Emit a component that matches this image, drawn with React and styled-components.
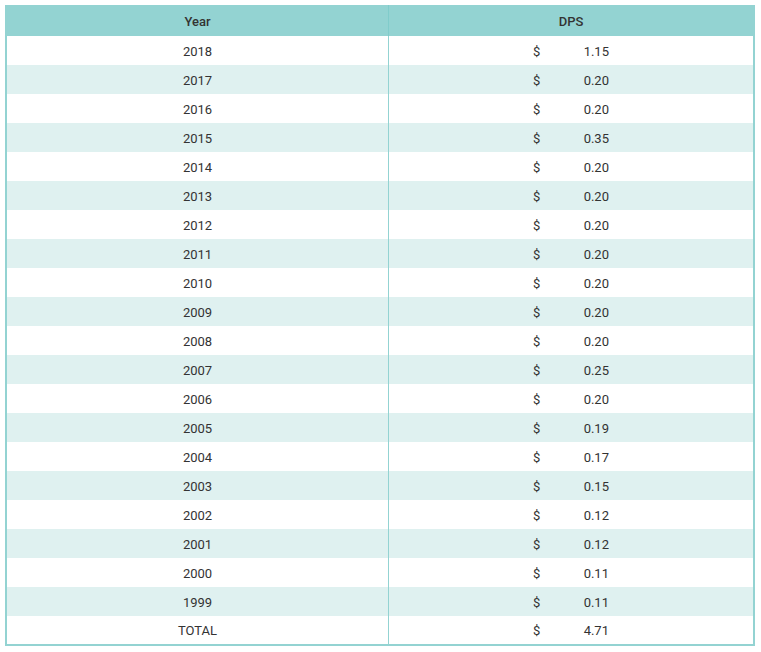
import React from "react";
import styled, { createGlobalStyle } from "styled-components";

const rows = [
  ["2018", "1.15"],
  ["2017", "0.20"],
  ["2016", "0.20"],
  ["2015", "0.35"],
  ["2014", "0.20"],
  ["2013", "0.20"],
  ["2012", "0.20"],
  ["2011", "0.20"],
  ["2010", "0.20"],
  ["2009", "0.20"],
  ["2008", "0.20"],
  ["2007", "0.25"],
  ["2006", "0.20"],
  ["2005", "0.19"],
  ["2004", "0.17"],
  ["2003", "0.15"],
  ["2002", "0.12"],
  ["2001", "0.12"],
  ["2000", "0.11"],
  ["1999", "0.11"],
  ["TOTAL", "4.71"],
];

export default function App() {
  return (
    <>
      <GlobalStyle />
      <Wrap>
        <Table>
          <thead>
            <tr>
              <Head $left>Year</Head>
              <Head>DPS</Head>
            </tr>
          </thead>
          <tbody>
            {rows.map(([year, dps], i) => (
              <Row key={year} $striped={i % 2 === 1}>
                <Cell $left>{year}</Cell>
                <Cell>
                  <Money>
                    <span>$</span>
                    <span>{dps}</span>
                  </Money>
                </Cell>
              </Row>
            ))}
          </tbody>
        </Table>
      </Wrap>
    </>
  );
}

const GlobalStyle = createGlobalStyle`
  body {
    margin: 0;
    background: #fff;
    font-family: Roboto, "Liberation Sans", sans-serif;
  }
`;

const Wrap = styled.div`
  padding: 5px 6px 0 5px;
`;

const Table = styled.table`
  width: 750px;
  border-collapse: collapse;
  border: 2px solid #93d3d2;
  border-top: none;
  table-layout: fixed;
  font-size: 13px;
  color: #333;
`;

const Head = styled.th`
  height: 29px;
  padding: 2px 0 0;
  background: #93d3d2;
  font-weight: 500;
  text-align: center;
  width: ${(p) => (p.$left ? "381px" : "auto")};
  border-right: ${(p) => (p.$left ? "1px solid #80cccb" : "none")};
`;

const Row = styled.tr`
  height: 29px;
  background: ${(p) => (p.$striped ? "#dff1f0" : "#fff")};
`;

const Cell = styled.td`
  padding: 1px 0 0;
  text-align: center;
  border-right: ${(p) => (p.$left ? "1px solid #93d3d2" : "none")};
`;

const Money = styled.div`
  display: inline-flex;
  justify-content: space-between;
  width: 76px;
  text-align: left;
`;
